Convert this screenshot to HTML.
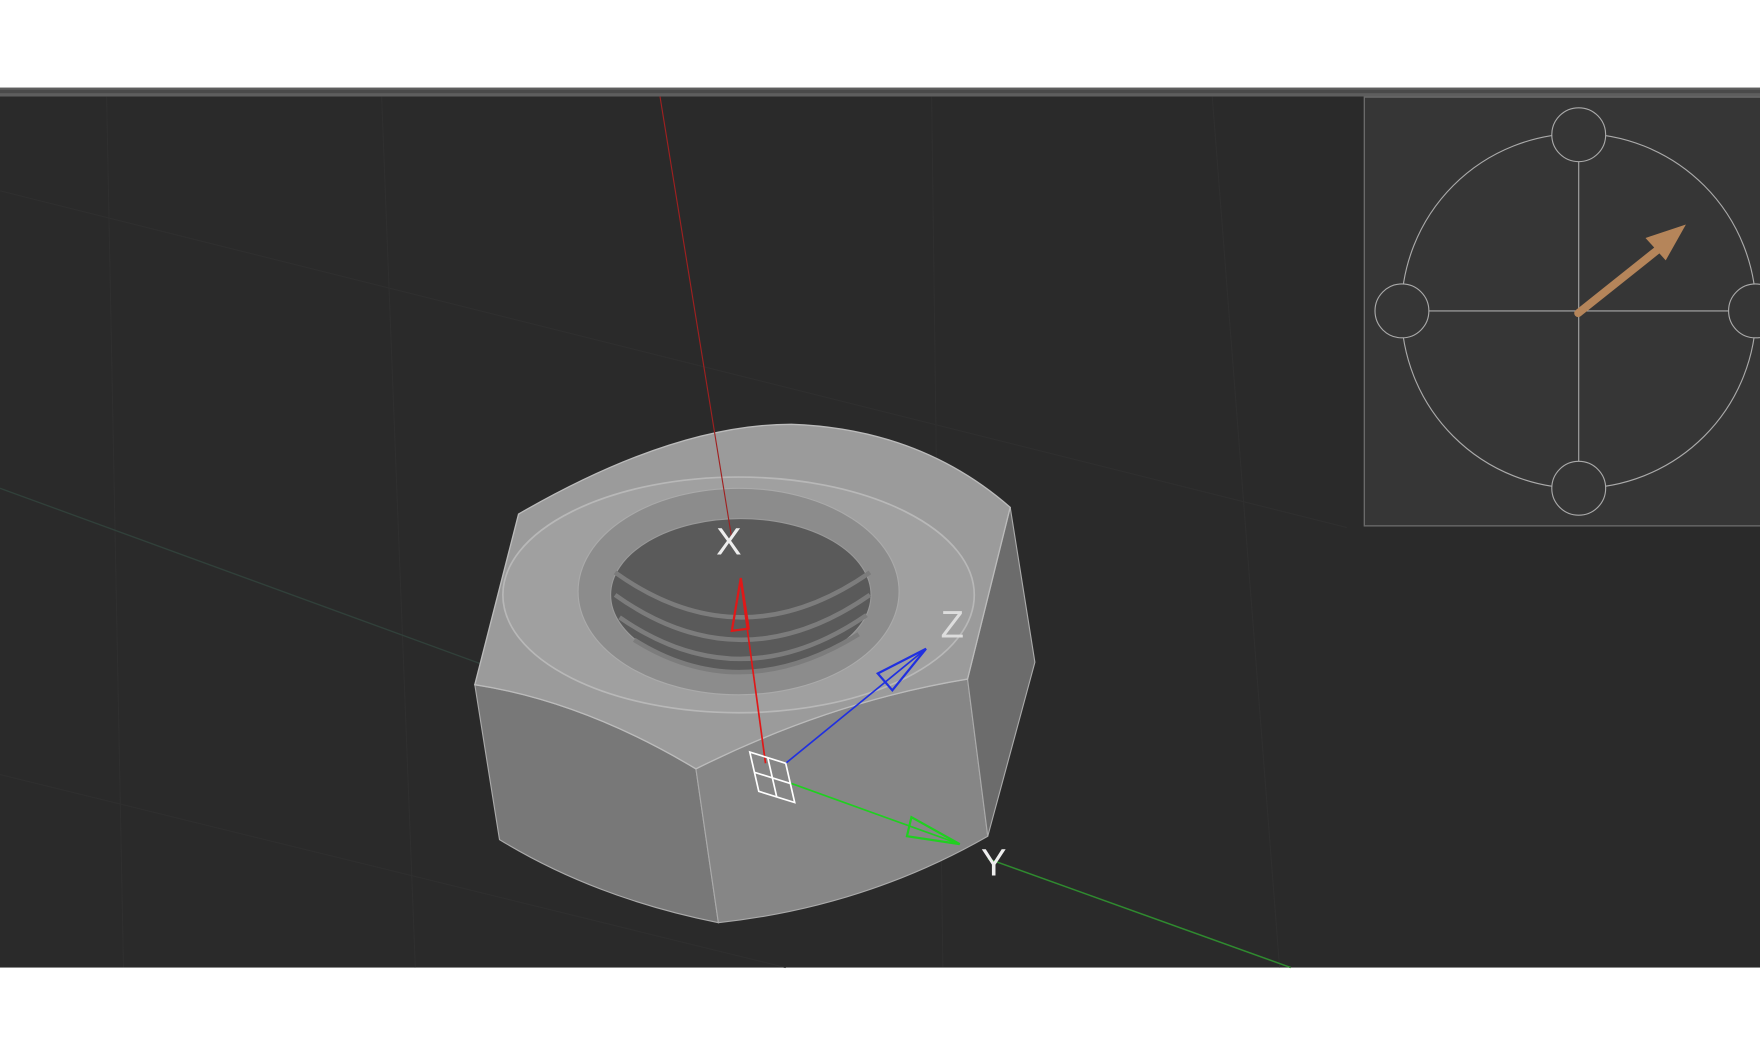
<!DOCTYPE html>
<html><head><meta charset="utf-8"><style>
html,body{margin:0;padding:0;background:#fff;width:1760px;height:1056px;overflow:hidden}
svg{display:block}
text{font-family:"Liberation Sans",sans-serif}
</style></head><body>
<svg width="1760" height="1056" viewBox="0 0 1568 940.8" xmlns="http://www.w3.org/2000/svg">
<rect x="0" y="0" width="1568" height="940.8" fill="#fff"/>
<rect x="0" y="78" width="1568" height="9" fill="#5e5e5e"/>
<rect x="0" y="80" width="1568" height="3" fill="#4a4a4a"/>
<rect x="0" y="86" width="1568" height="776" fill="#2a2a2a"/>
<g stroke="#2f2f2f" stroke-width="1" fill="none">
<line x1="95" y1="86" x2="110" y2="862"/><line x1="340" y1="86" x2="370" y2="862"/>
<line x1="830" y1="86" x2="840" y2="862"/><line x1="1080" y1="86" x2="1140" y2="862"/>
<line x1="0" y1="170" x2="1200" y2="470"/><line x1="0" y1="690" x2="700" y2="862"/>
</g>
<line x1="0" y1="435" x2="430" y2="592" stroke="#31403a" stroke-width="1.2"/>
<line x1="880" y1="765" x2="1150" y2="862" stroke="#2f8a2f" stroke-width="1.3"/>
<!-- nut -->
<path d="M423,610 Q520,625 620,685 L640,822 Q530,800 445,748 Z" fill="#787878" stroke="#aaa" stroke-width="1"/>
<path d="M620,685 Q740,625 862,605 L880,745 Q770,808 640,822 Z" fill="#868686" stroke="#aaa" stroke-width="1"/>
<path d="M900,452 L922,590 L880,745 L862,605 Z" fill="#6c6c6c" stroke="#aaa" stroke-width="1"/>
<path d="M462,458 Q600,378 705,378 Q820,382 900,452 L862,605 Q740,625 620,685 Q520,625 423,610 Z" fill="#9b9b9b" stroke="#bbb" stroke-width="1.2"/>
<ellipse cx="658" cy="530" rx="210" ry="105" fill="#a0a0a0" stroke="#b8b8b8" stroke-width="1.5"/>
<ellipse cx="658" cy="527" rx="143" ry="92" fill="#8c8c8c" stroke="#aaa"/>
<ellipse cx="660" cy="530" rx="116" ry="68" fill="#5a5a5a" stroke="#999"/>
<g fill="none" stroke="#7c7c7c" stroke-width="4">
<path d="M548,510 Q660,590 775,510"/><path d="M548,530 Q660,610 775,530"/>
<path d="M552,550 Q660,625 772,548"/><path d="M565,570 Q660,630 765,565"/>
</g>
<line x1="588" y1="86" x2="652" y2="480" stroke="#a02020" stroke-width="1"/>
<!-- axes -->
<line x1="682" y1="680" x2="660" y2="518" stroke="#e01818" stroke-width="1.5"/>
<path d="M660,515 L652,562 L667,560 Z" fill="none" stroke="#e01818" stroke-width="2"/>
<line x1="700" y1="680" x2="825" y2="578" stroke="#2030e0" stroke-width="1.5"/>
<path d="M825,578 L782,600 L795,615 Z" fill="none" stroke="#2030e0" stroke-width="2"/>
<line x1="705" y1="698" x2="855" y2="752" stroke="#20d020" stroke-width="1.5"/>
<path d="M855,752 L812,728 L808,745 Z" fill="none" stroke="#20d020" stroke-width="2"/>
<path d="M668,670 L700,680 L708,715 L676,705 Z M672,688 L704,698 M684,675 L692,710" fill="none" stroke="#fff" stroke-width="1.5"/>
<text x="638" y="494" fill="#eee" font-size="34">X</text>
<text x="838" y="568" fill="#ddd" font-size="34">Z</text>
<text x="874" y="780" fill="#eee" font-size="34">Y</text>
<!-- compass panel -->
<rect x="1215.5" y="86.5" width="360" height="382" fill="#363636" stroke="#6a6a6a" stroke-width="1.2"/>
<g fill="none" stroke="#aaa" stroke-width="1">
<circle cx="1406.5" cy="277" r="158"/>
<line x1="1406.5" y1="143" x2="1406.5" y2="412"/>
<line x1="1273" y1="277" x2="1545" y2="277"/>
</g>
<g fill="#363636" stroke="#aaa" stroke-width="1">
<circle cx="1406.5" cy="120" r="24"/><circle cx="1406.5" cy="435" r="24"/>
<circle cx="1249" cy="277" r="24"/><circle cx="1564" cy="277" r="24"/>
</g>
<line x1="1406" y1="279" x2="1480" y2="220" stroke="#b5855a" stroke-width="7" stroke-linecap="round"/>
<path d="M1502,200 L1466,212 L1484,232 Z" fill="#b5855a"/>
</svg>
</body></html>
